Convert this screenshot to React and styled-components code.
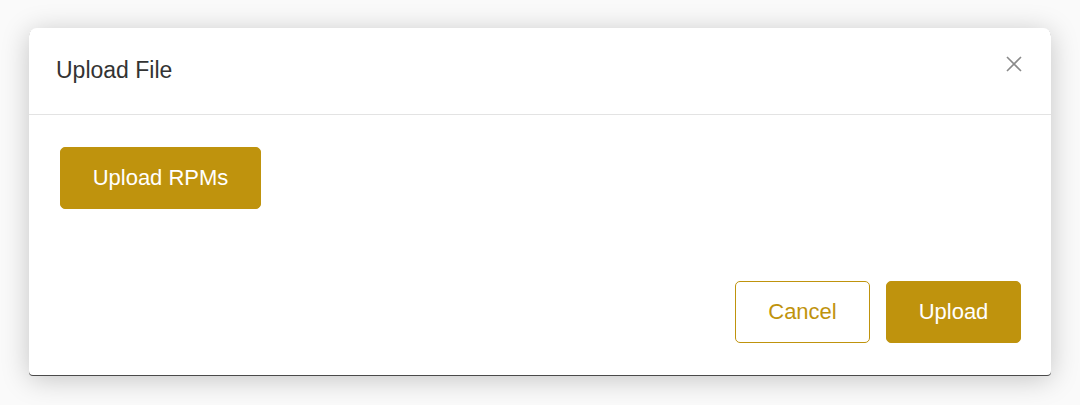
import React from 'react';
import styled, { createGlobalStyle } from 'styled-components';

const gold = '#bf930d';

const GlobalStyle = createGlobalStyle`
  html, body {
    margin: 0;
    padding: 0;
    background: #ffffff;
    font-family: "Liberation Sans", Arial, sans-serif;
  }
`;

const Page = styled.div`
  width: 1080px;
  height: 405px;
  box-sizing: border-box;
  padding: 28px 29px 0;
  background: #fafafa;
`;

const Modal = styled.div`
  width: 1022px;
  height: 347px;
  background: #fff;
  border-radius: 8px 8px 4px 4px;
  box-shadow: 0 1px 0 #4a4a4a, 0 4px 28px rgba(0, 0, 0, 0.22);
  display: flex;
  flex-direction: column;
`;

const Header = styled.div`
  height: 86px;
  flex-shrink: 0;
  display: flex;
  align-items: center;
  justify-content: space-between;
  padding: 0 28px 0 27px;
  border-bottom: 1px solid #e3e3e3;
`;

const Title = styled.h3`
  margin: 0;
  font-size: 23px;
  font-weight: 400;
  color: #333;
  transform: translateY(-1px);
`;

const Close = styled.button`
  border: 0;
  background: none;
  padding: 0;
  width: 18px;
  height: 18px;
  display: flex;
  align-items: center;
  justify-content: center;
  margin-top: -14px;
  cursor: pointer;
`;

const Body = styled.div`
  flex: 1;
  padding: 32px 31px;
`;

const Footer = styled.div`
  display: flex;
  justify-content: flex-end;
  gap: 16px;
  padding: 0 30px 32px;
`;

const Button = styled.button`
  height: 62px;
  width: ${(p) => p.$width}px;
  box-sizing: border-box;
  border-radius: 5px;
  border: 1px solid ${gold};
  background: ${(p) => (p.$outline ? '#fff' : gold)};
  color: ${(p) => (p.$outline ? gold : '#fff')};
  font-family: "Liberation Sans", Arial, sans-serif;
  font-size: 22px;
  cursor: pointer;
`;

const App = () => (
  <>
    <GlobalStyle />
    <Page>
      <Modal>
        <Header>
          <Title>Upload File</Title>
          <Close aria-label="close">
            <svg width="16" height="16" viewBox="0 0 16 16">
              <path d="M1 1L15 15M15 1L1 15" stroke="#8a8a8a" strokeWidth="1.6" fill="none" />
            </svg>
          </Close>
        </Header>
        <Body>
          <Button $width={201}>Upload RPMs</Button>
        </Body>
        <Footer>
          <Button $outline $width={135}>Cancel</Button>
          <Button $width={135}>Upload</Button>
        </Footer>
      </Modal>
    </Page>
  </>
);

export default App;
